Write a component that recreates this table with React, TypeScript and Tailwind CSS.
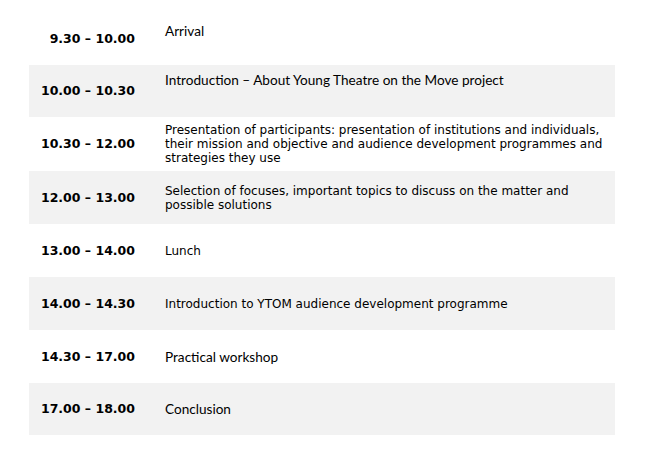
import React from 'react';

interface Slot {
  time: string;
  lines: string[];
  font: 'tahoma' | 'calibri';
  pad?: string;
  h: string;
  gray: boolean;
}

const slots: Slot[] = [
  { time: '9.30 – 10.00', lines: ['Arrival'], font: 'calibri', pad: 'pt-[11px]', h: 'h-[53px]', gray: false },
  { time: '10.00 – 10.30', lines: ['Introduction – About Young Theatre on the Move project'], font: 'calibri', pad: 'pt-[7px]', h: 'h-[52px]', gray: true },
  {
    time: '10.30 – 12.00',
    lines: [
      'Presentation of participants: presentation of institutions and individuals,',
      'their mission and objective and audience development programmes and',
      'strategies they use',
    ],
    font: 'tahoma',
    h: 'h-[54px]',
    gray: false,
  },
  {
    time: '12.00 – 13.00',
    lines: ['Selection of focuses, important topics to discuss on the matter and', 'possible solutions'],
    font: 'tahoma',
    h: 'h-[53px]',
    gray: true,
  },
  { time: '13.00 – 14.00', lines: ['Lunch'], font: 'tahoma', h: 'h-[53px]', gray: false },
  { time: '14.00 – 14.30', lines: ['Introduction to YTOM audience development programme'], font: 'tahoma', h: 'h-[53px]', gray: true },
  { time: '14.30 – 17.00', lines: ['Practical workshop'], font: 'calibri', h: 'h-[53px]', gray: false },
  { time: '17.00 – 18.00', lines: ['Conclusion'], font: 'calibri', h: 'h-[52px]', gray: true },
];

export default function App() {
  return (
    <div className="w-[660px] h-[462px] bg-white pt-[12px] pl-[29px] text-black">
      <div className="w-[586px] flex flex-col">
        {slots.map((s, i) => (
          <div key={i} className={`flex ${s.h} ${s.gray ? 'bg-[#f2f2f2]' : 'bg-white'}`}>
            <div className="w-[106px] flex items-center justify-end font-[family-name:'DejaVu_Sans',sans-serif] font-bold text-[12.5px] pt-[1px]">
              {s.time}
            </div>
            <div
              className={`ml-[30px] flex-1 flex flex-col ${s.pad ? `justify-start ${s.pad}` : 'justify-center'} ${
                s.font === 'tahoma'
                  ? "font-[family-name:'DejaVu_Sans',sans-serif] text-[12px] leading-[14px]"
                  : "font-[family-name:'Lato',sans-serif] text-[13.6px] leading-[16px]"
              }`}
            >
              {s.lines.map((l, j) => (
                <div key={j} className="whitespace-nowrap">
                  {l}
                </div>
              ))}
            </div>
          </div>
        ))}
      </div>
    </div>
  );
}
